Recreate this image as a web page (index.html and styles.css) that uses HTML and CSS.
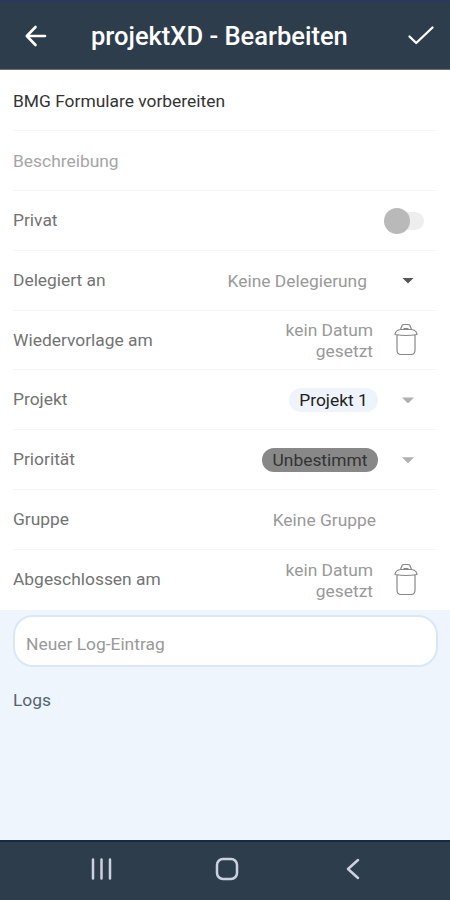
FILE: index.html
```html
<!DOCTYPE html>
<html lang="de">
<head>
<meta charset="utf-8">
<title>projektXD - Bearbeiten</title>
<link rel="stylesheet" href="styles.css">
</head>
<body>
<div class="app">
  <header class="topbar">
    <svg class="back" width="24" height="24" viewBox="0 0 24 24"><path d="M21 12H3M11.500 3L2.800 12L11.500 21"/></svg>
    <h1>projektXD - Bearbeiten</h1>
    <svg class="check" width="28" height="22" viewBox="0 0 28 22"><path d="M2.500 11.500L9.200 18L25.500 2.500"/></svg>
  </header>
  <main class="form">
    <div class="row"><span class="entry">BMG Formulare vorbereiten</span></div>
    <div class="row"><span class="placeholder">Beschreibung</span></div>
    <div class="row"><span class="label">Privat</span><span class="switch"><span class="knob"></span></span></div>
    <div class="row"><span class="label">Delegiert an</span><span class="value delegate">Keine Delegierung</span><span class="caret dark"></span></div>
    <div class="row"><span class="label">Wiedervorlage am</span><span class="value date">kein Datum<br>gesetzt</span>
      <svg class="trash" width="24" height="34" viewBox="0 0 24 34"><path d="M6.500 6.500L8 2.500Q8.500 1.500 10 1.500H14Q15.500 1.500 16 2.500L17.500 6.500M10 5.500H14M1 11.500Q1.500 7 6.500 6.500H17.500Q22.500 7 23 11.500Q12 13.500 1 11.500ZM3 12.500V27Q3 31.500 7 31.500H17Q21 31.500 21 27V12.500"/></svg></div>
    <div class="row"><span class="label">Projekt</span><span class="chip project">Projekt 1</span><span class="caret"></span></div>
    <div class="row"><span class="label">Priorität</span><span class="chip priority">Unbestimmt</span><span class="caret"></span></div>
    <div class="row"><span class="label">Gruppe</span><span class="value group">Keine Gruppe</span></div>
    <div class="row"><span class="label">Abgeschlossen am</span><span class="value date">kein Datum<br>gesetzt</span>
      <svg class="trash" width="24" height="34" viewBox="0 0 24 34"><path d="M6.500 6.500L8 2.500Q8.500 1.500 10 1.500H14Q15.500 1.500 16 2.500L17.500 6.500M10 5.500H14M1 11.500Q1.500 7 6.500 6.500H17.500Q22.500 7 23 11.500Q12 13.500 1 11.500ZM3 12.500V27Q3 31.500 7 31.500H17Q21 31.500 21 27V12.500"/></svg></div>
  </main>
  <section class="logs">
    <div class="log-input">Neuer Log-Eintrag</div>
    <h2>Logs</h2>
  </section>
  <nav class="navbar">
    <svg width="22" height="22" viewBox="0 0 22 22"><path d="M2 1.500V20.500M10.500 1.500V20.500M19 1.500V20.500"/></svg>
    <svg class="home" width="24" height="24" viewBox="0 0 24 24"><rect x="2" y="2" width="20" height="20" rx="6"/></svg>
    <svg width="14" height="22" viewBox="0 0 14 22"><path d="M12 2L2 11L12 20"/></svg>
  </nav>
</div>
</body>
</html>
```
FILE: styles.css
```css
* { box-sizing: border-box; }
body { margin: 0; font-family: Roboto, sans-serif; font-size: 17.4px; background: #fff; }
svg { display: block; flex: none; fill: none; stroke-linecap: round; stroke-linejoin: round; }
.app { width: 450px; height: 900px; display: flex; flex-direction: column; }
.topbar { height: 70px; flex: none; display: flex; align-items: center; padding: 1px 15px 0 24px; background: #2e3d4c; border-top: 2px solid #2d365e; border-bottom: 1px solid #66717c; }
.topbar svg { stroke: #fff; stroke-width: 2.6; }
.topbar .check { margin-left: auto; stroke-width: 2.3; }
h1 { margin: 0 0 0 43px; font-size: 25.5px; line-height: 30px; font-weight: 500; color: #fff; white-space: nowrap; }
.form { flex: none; height: 540px; padding: 1px 13px 0; background: #fff; }
.row { height: 59.900px; display: flex; align-items: center; border-bottom: 1px solid #f6f6f6; white-space: nowrap; }
.row:last-child { border-bottom-color: transparent; }
.entry { color: #333; padding-top: 1px; }
.placeholder { color: #a5a5a5; padding-top: 1px; }
.label { color: #737373; margin-right: auto; padding-bottom: 1px; }
.value { color: #999; text-align: right; line-height: 21px; padding-top: 2px; }
.delegate { margin-right: 35px; }
.date { margin-right: 21px; }
.group { margin-right: 61px; }
.caret { width: 12px; height: 6px; margin: 1px 23px 0 0; background: #b0b0b0; clip-path: polygon(0 0, 100% 0, 50% 100%); }
.caret.dark { background: #555; }
.trash { stroke: #888; stroke-width: 1.2; margin-right: 19px; }
.switch { width: 38px; height: 18px; border-radius: 9px; background: #eee; margin: 1px 13px 0 0; display: flex; align-items: center; }
.knob { width: 26px; height: 26px; flex: none; border-radius: 50%; background: #b9b9b9; margin-left: -2px; }
.chip { height: 24px; line-height: 24px; border-radius: 12px; text-align: center; margin: 1px 24px 0 0; }
.project { width: 89px; background: #eff4fc; color: #222; }
.priority { width: 116px; background: #888; color: #333; }
.logs { flex: 1; background: #eff5fd; padding: 5px 13px 0; }
.log-input { width: 425px; height: 52px; border: 2px solid #d9e7f7; border-radius: 20px; background: #fff; color: #999; padding: 4px 11px 0; line-height: 46px; }
h2 { margin: 23px 0 0; font-size: 17.4px; line-height: 20px; font-weight: 400; color: #536471; }
.navbar { height: 60px; flex: none; background: #2e3d4c; border-top: 2px solid #142b40; display: flex; align-items: center; padding: 0 90px 4px 91px; justify-content: space-between; }
.navbar svg { stroke: #cbd1df; stroke-width: 2.5; }
.navbar .home { margin-right: 6px; }
```
